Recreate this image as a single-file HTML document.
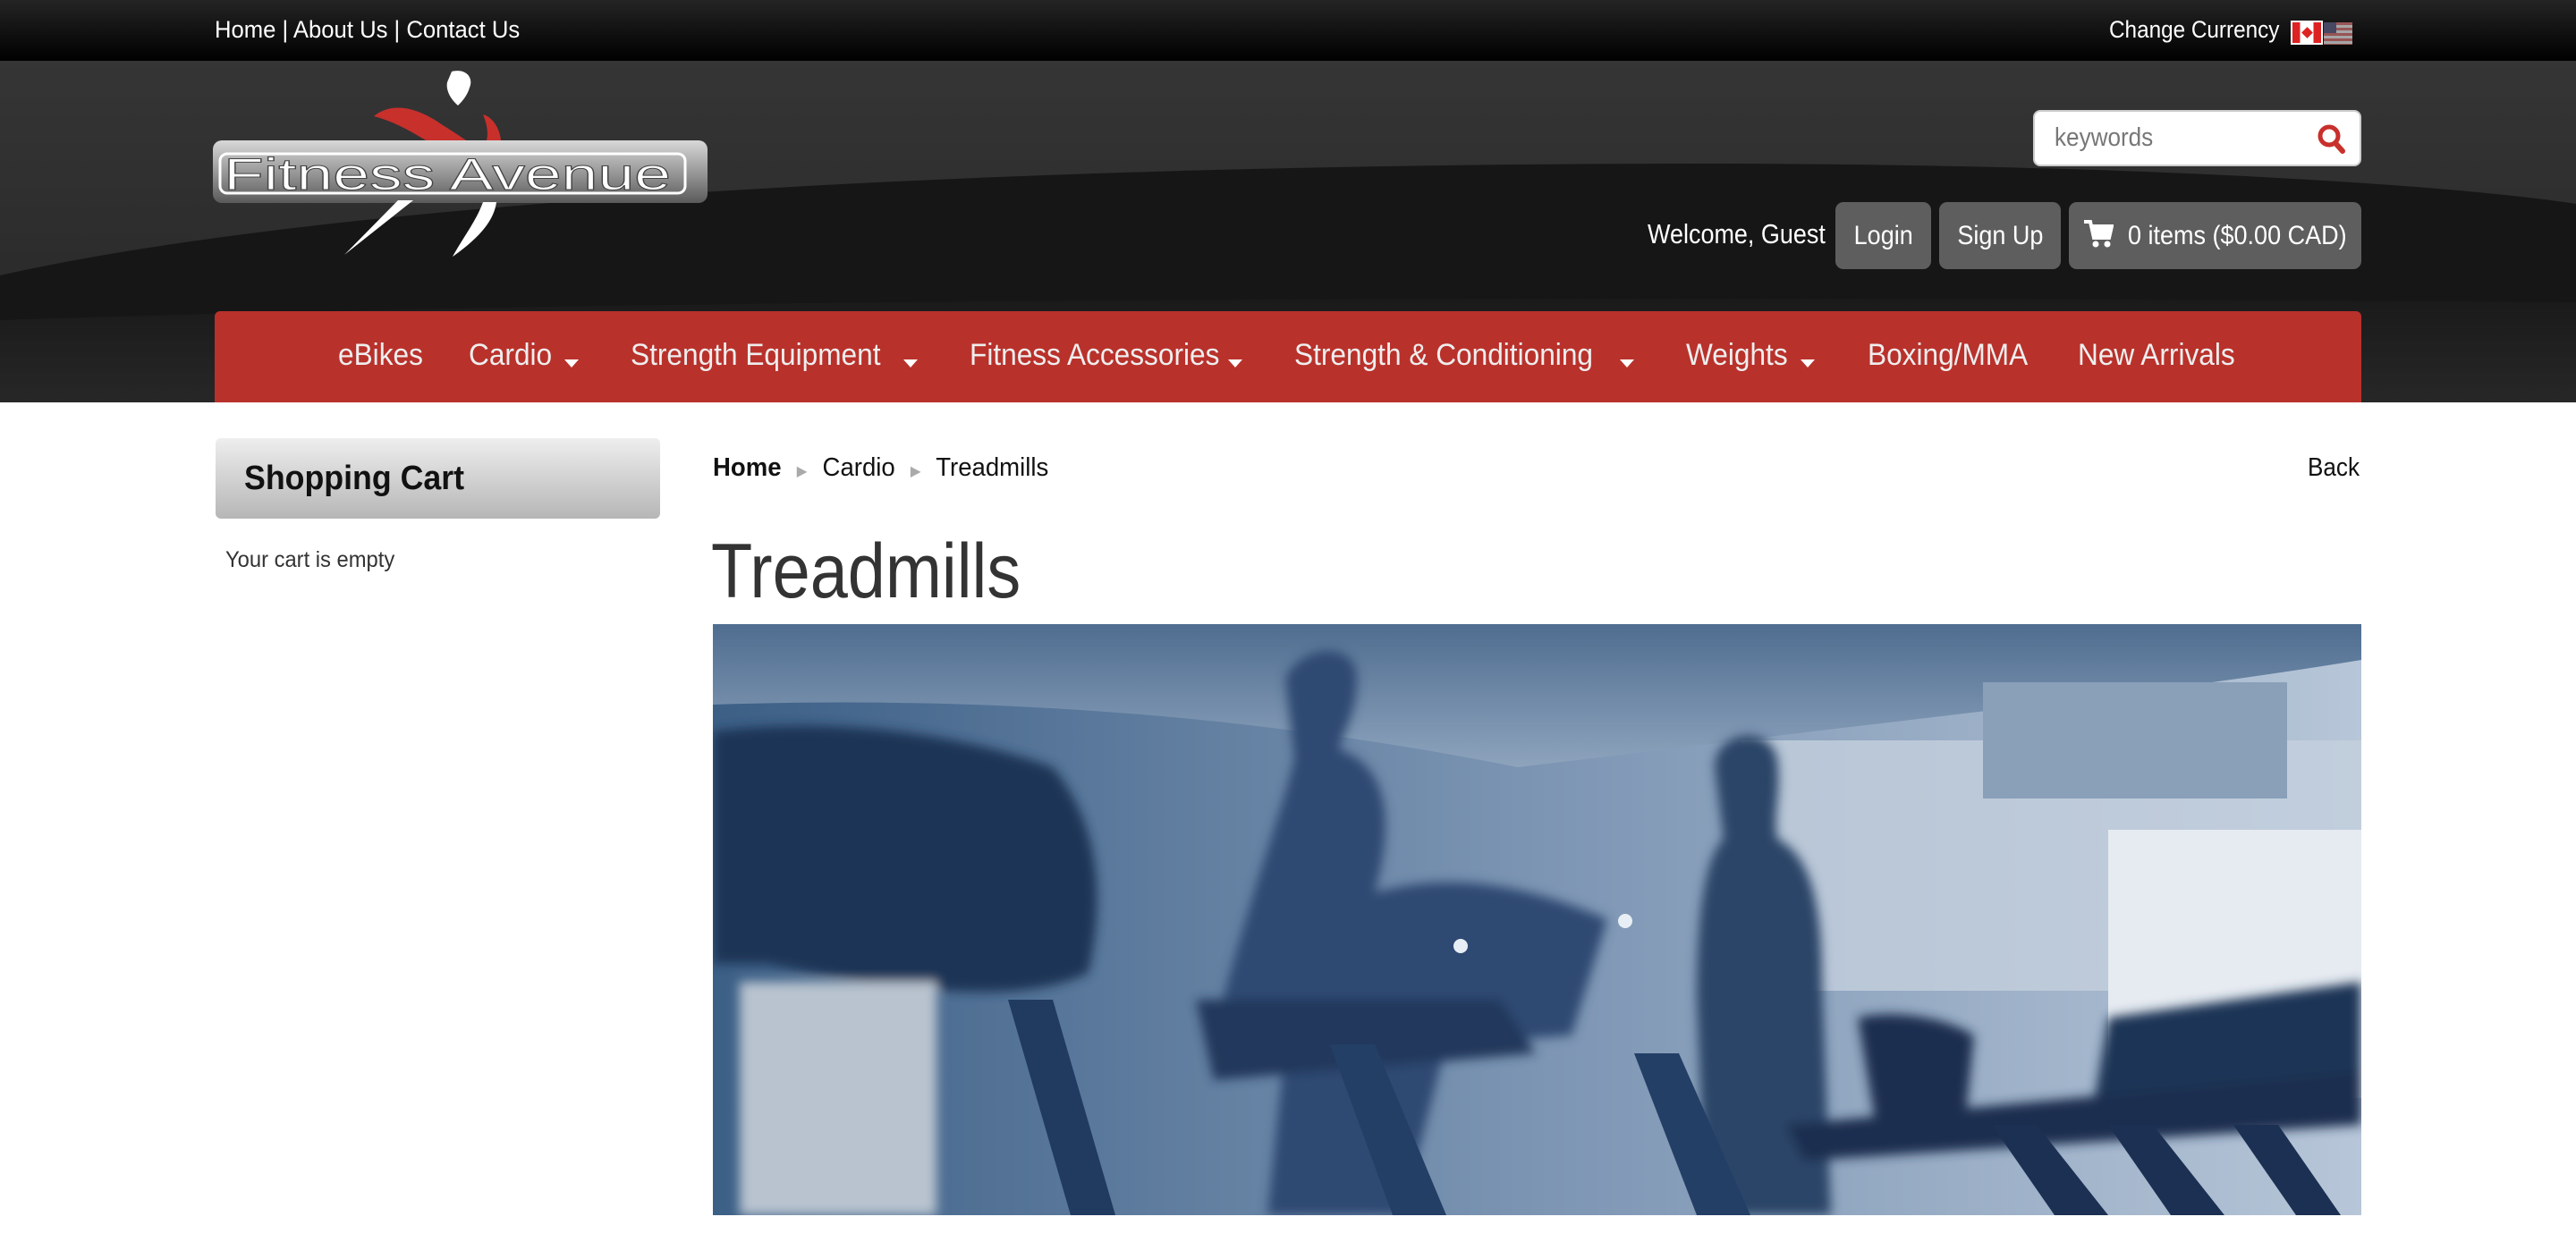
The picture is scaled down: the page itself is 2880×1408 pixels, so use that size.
<!DOCTYPE html>
<html><head><meta charset="utf-8"><style>
*{margin:0;padding:0;box-sizing:border-box}
body{width:2880px;height:1408px;background:#fff;font-family:"Liberation Sans",sans-serif;position:relative;overflow:hidden}
.abs{position:absolute;white-space:nowrap}
#top{position:absolute;left:0;top:0;width:2880px;height:68px;background:linear-gradient(#242424,#000)}
#hdr{position:absolute;left:0;top:68px;width:2880px;height:382px;background:#2c2c2c;overflow:hidden}
.narrow{display:inline-block;transform:scaleX(.9);transform-origin:left center;white-space:nowrap}
.btn{position:absolute;top:226px;height:75px;background:#5e5e5e;border-radius:9px;color:#fff;font-size:30px;line-height:75px;text-align:center;white-space:nowrap}
#nav{position:absolute;left:240px;top:348px;width:2400px;height:102px;background:#b9312b;border-radius:6px 6px 0 0}
.ni{position:absolute;top:30px;color:#eee;font-size:34px;white-space:nowrap}
.ni span{display:inline-block;transform:scaleX(.93);transform-origin:left center}
.car{position:absolute;top:54px;width:0;height:0;border-left:8px solid transparent;border-right:8px solid transparent;border-top:9px solid #fff}
</style></head><body>
<div id="top"></div>
<div class="abs" style="left:240px;top:18px;color:#fff;font-size:27px"><span class="narrow" style="transform:scaleX(.95)">Home | About Us | Contact Us</span></div>
<div class="abs" style="left:2358px;top:18px;color:#fff;font-size:27px"><span class="narrow">Change Currency</span></div>
<div class="abs" style="left:2561px;top:23px;width:36px;height:27px;border:2px solid #fff;background:linear-gradient(90deg,#d22 0 26%,#fff 26% 74%,#d22 74%)"><div style="position:absolute;left:12px;top:7px;width:9px;height:9px;background:#d22;transform:rotate(45deg)"></div></div>
<div class="abs" style="left:2598px;top:25px;width:32px;height:25px;background:repeating-linear-gradient(#b66 0 3px,#ccc 3px 6px);opacity:.8"><div style="width:14px;height:12px;background:#557"></div></div>
<div id="hdr">
<svg width="2880" height="382" style="position:absolute;left:0;top:0">
<defs><linearGradient id="hg" x1="0" y1="0" x2="0" y2="1"><stop offset="0" stop-color="#353535"/><stop offset="1" stop-color="#262626"/></linearGradient>
<linearGradient id="lo" x1="0" y1="0" x2="0" y2="1"><stop offset="0" stop-color="#1a1a1a"/><stop offset="1" stop-color="#272727"/></linearGradient></defs>
<rect width="2880" height="382" fill="url(#hg)"/>
<path d="M0 240 C400 150 1200 115 1900 115 C2400 115 2750 140 2880 160 L2880 382 L0 382Z" fill="#161616"/>
<path d="M0 290 C600 270 1500 260 2880 270 L2880 382 L0 382Z" fill="url(#lo)"/>
</svg>
</div>
<svg width="600" height="340" style="position:absolute;left:230px;top:68px" viewBox="230 68 600 340">
<defs><linearGradient id="lg" x1="0" y1="0" x2="0" y2="1"><stop offset="0" stop-color="#d8d8d8"/><stop offset=".5" stop-color="#9a9a9a"/><stop offset="1" stop-color="#5a5a5a"/></linearGradient></defs>
<path d="M505 80 C520 76 530 86 525 98 C522 108 516 114 512 118 C505 112 498 102 500 92Z" fill="#fff"/>
<path d="M418 130 C440 112 470 122 495 140 C515 152 530 165 540 165 C548 155 545 140 540 128 C555 132 565 155 558 175 C548 190 530 190 510 178 C480 160 450 138 418 130Z" fill="#c8302c"/>
<rect x="238" y="157" width="553" height="70" rx="10" fill="url(#lg)"/>
<rect x="246" y="172" width="520" height="44" rx="8" fill="none" stroke="#fff" stroke-width="3"/>
<text x="250" y="212" font-family="Liberation Sans,sans-serif" font-size="50" fill="#fff" stroke="#444" stroke-width="1" textLength="500" lengthAdjust="spacingAndGlyphs">Fitness Avenue</text>
<path d="M445 224 L462 224 L385 285 Z" fill="#fff"/>
<path d="M540 226 L555 226 C552 250 530 270 506 287 C518 265 532 248 540 226Z" fill="#fff"/>
</svg>
<div style="position:absolute;left:2273px;top:123px;width:367px;height:63px;background:#fff;border-radius:8px;border:2px solid #ccc"><span style="position:absolute;left:22px;top:13px;color:#777;font-size:29px" class="narrow">keywords</span>
<svg width="32" height="34" style="position:absolute;right:16px;top:13px"><circle cx="14" cy="14" r="10" fill="none" stroke="#c8302c" stroke-width="5"/><path d="M21 22 L29 31" stroke="#c8302c" stroke-width="6" stroke-linecap="round"/></svg></div>
<div class="abs" style="left:1842px;top:244px;color:#fff;font-size:31px"><span class="narrow" style="transform:scaleX(.87)">Welcome, Guest</span></div>
<div class="btn" style="left:2052px;width:107px"><span class="narrow" style="transform-origin:center">Login</span></div>
<div class="btn" style="left:2168px;width:136px"><span class="narrow" style="transform-origin:center">Sign Up</span></div>
<div class="btn" style="left:2313px;width:327px;text-align:left">
<svg width="34" height="34" style="position:absolute;left:16px;top:18px" viewBox="0 0 34 34"><path d="M1 4 H8 L12 22 H29 L32 9 H10" fill="none" stroke="#fff" stroke-width="4"/><rect x="11" y="9" width="20" height="12" fill="#fff"/><circle cx="14" cy="29" r="3.5" fill="#fff"/><circle cx="27" cy="29" r="3.5" fill="#fff"/></svg>
<span class="narrow" style="position:absolute;left:66px;top:0">0 items ($0.00 CAD)</span></div>
<div id="nav">
<div class="ni" style="left:138px"><span>eBikes</span></div>
<div class="ni" style="left:284px"><span>Cardio</span></div><span class="car" style="left:391px"></span>
<div class="ni" style="left:465px"><span>Strength Equipment</span></div><span class="car" style="left:770px"></span>
<div class="ni" style="left:844px"><span>Fitness Accessories</span></div><span class="car" style="left:1133px"></span>
<div class="ni" style="left:1207px"><span>Strength &amp; Conditioning</span></div><span class="car" style="left:1571px"></span>
<div class="ni" style="left:1645px"><span>Weights</span></div><span class="car" style="left:1773px"></span>
<div class="ni" style="left:1848px"><span>Boxing/MMA</span></div>
<div class="ni" style="left:2083px"><span>New Arrivals</span></div>
</div>
<div style="position:absolute;left:241px;top:490px;width:497px;height:90px;border-radius:6px;background:linear-gradient(#eee,#b6b6b6)"></div>
<div class="abs" style="left:273px;top:514px;font-size:38px;font-weight:bold;color:#111"><span class="narrow" style="transform:scaleX(.94)">Shopping Cart</span></div>
<div class="abs" style="left:252px;top:612px;font-size:25px;color:#333"><span class="narrow" style="transform:scaleX(.95)">Your cart is empty</span></div>
<div class="abs" style="left:797px;top:507px;font-size:29px;color:#111"><span class="narrow" style="transform:scaleX(.95)"><b>Home</b> <span style="color:#aaa;font-size:16px;margin:0 10px">&#9654;</span> Cardio <span style="color:#aaa;font-size:16px;margin:0 10px">&#9654;</span> Treadmills</span></div>
<div class="abs" style="left:2580px;top:507px;font-size:29px;color:#111"><span class="narrow">Back</span></div>
<div class="abs" style="left:795px;top:590px;font-size:86px;color:#333"><span class="narrow" style="transform:scaleX(.88)">Treadmills</span></div>
<svg style="position:absolute;left:797px;top:698px" width="1843" height="661" viewBox="0 0 1843 661">
<defs><linearGradient id="bg" x1="0" y1="0" x2="1" y2="0"><stop offset="0" stop-color="#3c5f86"/><stop offset=".5" stop-color="#7c95b3"/><stop offset="1" stop-color="#b7c6d8"/></linearGradient>
<linearGradient id="cl" x1="0" y1="0" x2="0" y2="1"><stop offset="0" stop-color="#4f6d90"/><stop offset="1" stop-color="#8ea4bd"/></linearGradient>
<filter id="b"><feGaussianBlur stdDeviation="6"/></filter></defs>
<rect width="1843" height="661" fill="url(#bg)"/>
<path d="M0 0 H1843 V40 C1600 80 1300 110 1150 130 L900 160 C600 100 300 80 0 90Z" fill="url(#cl)"/>
<rect x="1150" y="130" width="693" height="280" fill="#c4d0dd" opacity=".8"/>
<rect x="1420" y="65" width="340" height="130" fill="#8aa0b8"/>
<rect x="1560" y="230" width="283" height="300" fill="#e6ebf1"/>
<g filter="url(#b)">
<path d="M0 120 C150 100 300 130 380 160 C430 220 440 300 420 390 C360 420 250 420 60 380 L0 380Z" fill="#1e3556"/>
<rect x="30" y="400" width="220" height="261" fill="#b8c3cf"/>
<path d="M640 60 C660 20 720 20 720 60 C720 100 705 120 700 140 C760 160 760 230 740 300 C780 290 860 270 1000 330 L960 460 L820 470 L770 661 L620 661 L640 470 L560 460 C600 300 640 200 650 150Z" fill="#2d4a72"/>
<path d="M1120 160 C1120 120 1180 110 1190 150 C1195 190 1185 210 1190 240 C1230 260 1240 320 1240 400 L1250 661 L1110 661 L1100 420 C1100 320 1110 260 1130 240Z" fill="#2a4468"/>
<path d="M540 420 L880 420 L920 480 L560 510Z" fill="#22395c"/>
<path d="M1280 440 C1320 430 1380 440 1410 460 L1400 560 L1300 560Z" fill="#1b2f4f"/>
<path d="M1560 440 L1843 400 L1843 540 L1540 560Z" fill="#1f3556"/>
<path d="M1200 560 L1843 500 L1843 560 L1220 600Z" fill="#1b2f4f"/>
</g>
<path d="M330 420 L380 420 L450 661 L400 661Z" fill="#203a60"/>
<path d="M690 470 L740 470 L820 661 L760 661Z" fill="#243f66"/>
<path d="M1030 480 L1080 480 L1160 661 L1100 661Z" fill="#243f66"/>
<path d="M1430 560 L1480 560 L1560 661 L1500 661Z" fill="#1b3052"/>
<path d="M1560 560 L1610 560 L1690 661 L1630 661Z" fill="#1b3052"/>
<path d="M1700 560 L1750 560 L1820 661 L1770 661Z" fill="#1b3052"/>
<circle cx="1020" cy="332" r="8" fill="#e8eef5"/><circle cx="836" cy="360" r="8" fill="#e8eef5"/>
</svg>
</body></html>
